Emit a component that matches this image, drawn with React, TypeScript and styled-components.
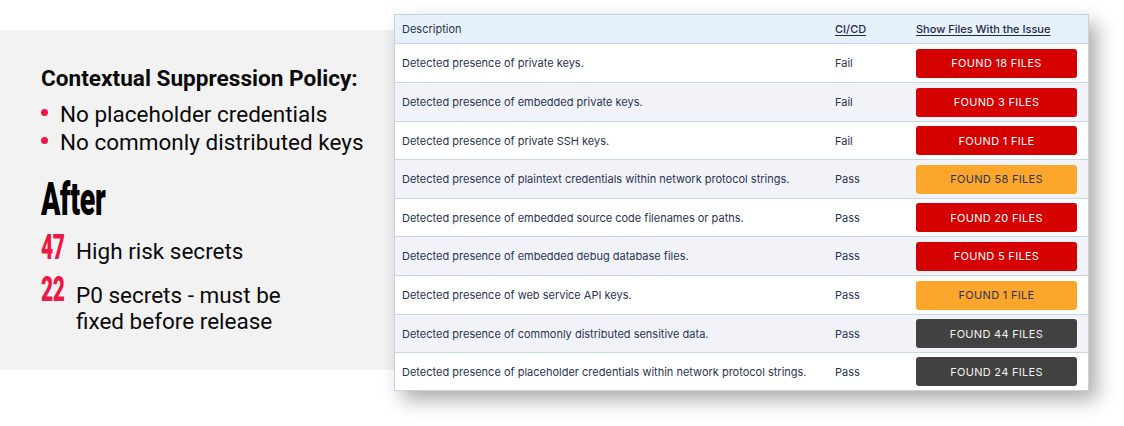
import React from "react";
import styled, { createGlobalStyle } from "styled-components";

const Global = createGlobalStyle`
  html, body { margin: 0; padding: 0; background: #ffffff; }
  body { width: 1124px; height: 426px; overflow: hidden; font-family: Roboto, "Liberation Sans", sans-serif; }
`;

const Page = styled.div`
  display: flex;
  align-items: flex-start;
  width: 1124px;
  height: 426px;
`;

const Panel = styled.div`
  box-sizing: border-box;
  width: 394px;
  height: 340px;
  margin-top: 30px;
  background: #f2f2f2;
  padding: 36px 0 0 41px;
  display: flex;
  flex-direction: column;
`;

const PolicyTitle = styled.div`
  font-family: Roboto, "Liberation Sans", sans-serif;
  font-weight: 700;
  font-size: 22.6px;
  line-height: 26px;
  color: #0a0a0a;
  white-space: nowrap;
`;

const BulletList = styled.ul`
  list-style: none;
  margin: 8px 0 0 0;
  padding: 0;
`;

const Bullet = styled.li`
  display: flex;
  align-items: center;
  font-size: 22.5px;
  line-height: 28px;
  color: #0a0a0a;
  white-space: nowrap;
  &::before {
    content: "";
    width: 7px;
    height: 7px;
    border-radius: 50%;
    background: #ee1846;
    margin: 0 12px 3px 0;
    flex: none;
  }
`;

const After = styled.div`
  font-family: Roboto, "Liberation Sans", sans-serif;
  font-weight: 900;
  font-size: 46px;
  line-height: 50px;
  color: #000;
  margin-top: 18px;
  transform: scaleX(0.62);
  transform-origin: left center;
  letter-spacing: -0.5px;
`;

const Stat = styled.div<{ $mt: number }>`
  display: flex;
  align-items: flex-start;
  margin-top: ${(p) => p.$mt}px;
`;

const StatNum = styled.span`
  display: inline-block;
  width: 35px;
  flex: none;
  font-family: Roboto, "Liberation Sans", sans-serif;
  font-weight: 900;
  font-size: 35px;
  line-height: 34px;
  color: #ee1846;
  transform: scaleX(0.6);
  transform-origin: left center;
  letter-spacing: -0.5px;
`;

const StatText = styled.span<{ $pt: number }>`
  font-size: 22.5px;
  line-height: 26px;
  color: #0a0a0a;
  white-space: nowrap;
  padding-top: ${(p) => p.$pt}px;
`;

const Card = styled.div`
  box-sizing: border-box;
  width: 695px;
  margin-top: 14px;
  border: 1px solid #c3d3e4;
  background: #fff;
  box-shadow: 8px 9px 18px rgba(0, 0, 0, 0.32);
  font-family: Inter, "Liberation Sans", sans-serif;
  color: #2a3452;
`;

const Row = styled.div<{ $bg: string; $h: number }>`
  box-sizing: border-box;
  display: grid;
  grid-template-columns: 440px 81px 161px;
  align-items: center;
  height: ${(p) => p.$h}px;
  background: ${(p) => p.$bg};
  border-bottom: 1px solid #c9d8e8;
  &:last-child { border-bottom: none; }
`;

const Cell = styled.div`
  padding-left: 7px;
  font-size: 11px;
  white-space: nowrap;
`;

const Plain = styled.div`
  font-size: 11px;
`;

const HeadLink = styled.div`
  font-size: 11px;
  font-weight: 500;
  text-decoration: underline;
  text-underline-offset: 2px;
  color: #1f2a48;
`;

const FoundButton = styled.div<{ $bg: string; $fg: string }>`
  height: 29px;
  border-radius: 3px;
  background: ${(p) => p.$bg};
  color: ${(p) => p.$fg};
  display: flex;
  align-items: center;
  justify-content: center;
  font-size: 11px;
  letter-spacing: 0.3px;
`;

const RED = { bg: "#d50000", fg: "#ffffff" };
const ORANGE = { bg: "#fca62c", fg: "#2a3452" };
const DARK = { bg: "#414141", fg: "#f2f2f2" };

const rows = [
  { d: "Detected presence of private keys.", c: "Fail", b: "FOUND 18 FILES", t: RED },
  { d: "Detected presence of embedded private keys.", c: "Fail", b: "FOUND 3 FILES", t: RED },
  { d: "Detected presence of private SSH keys.", c: "Fail", b: "FOUND 1 FILE", t: RED },
  { d: "Detected presence of plaintext credentials within network protocol strings.", c: "Pass", b: "FOUND 58 FILES", t: ORANGE },
  { d: "Detected presence of embedded source code filenames or paths.", c: "Pass", b: "FOUND 20 FILES", t: RED },
  { d: "Detected presence of embedded debug database files.", c: "Pass", b: "FOUND 5 FILES", t: RED },
  { d: "Detected presence of web service API keys.", c: "Pass", b: "FOUND 1 FILE", t: ORANGE },
  { d: "Detected presence of commonly distributed sensitive data.", c: "Pass", b: "FOUND 44 FILES", t: DARK },
  { d: "Detected presence of placeholder credentials within network protocol strings.", c: "Pass", b: "FOUND 24 FILES", t: DARK },
];

const heights = [39, 39, 38, 39, 38, 39, 39, 38, 37];

export default function App() {
  return (
    <>
      <Global />
      <Page>
        <Panel>
          <PolicyTitle>Contextual Suppression Policy:</PolicyTitle>
          <BulletList>
            <Bullet>No placeholder credentials</Bullet>
            <Bullet>No commonly distributed keys</Bullet>
          </BulletList>
          <After>After</After>
          <Stat $mt={7}>
            <StatNum>47</StatNum>
            <StatText $pt={7}>High risk secrets</StatText>
          </Stat>
          <Stat $mt={8}>
            <StatNum>22</StatNum>
            <StatText $pt={9}>
              P0 secrets - must be
              <br />
              fixed before release
            </StatText>
          </Stat>
        </Panel>
        <Card>
          <Row $bg="#e7f1fc" $h={29}>
            <Cell>Description</Cell>
            <HeadLink>CI/CD</HeadLink>
            <HeadLink>Show Files With the Issue</HeadLink>
          </Row>
          {rows.map((r, i) => (
            <Row key={i} $bg={i % 2 === 0 ? "#ffffff" : "#f1f3f9"} $h={heights[i]}>
              <Cell>{r.d}</Cell>
              <Plain>{r.c}</Plain>
              <FoundButton $bg={r.t.bg} $fg={r.t.fg}>{r.b}</FoundButton>
            </Row>
          ))}
        </Card>
      </Page>
    </>
  );
}
